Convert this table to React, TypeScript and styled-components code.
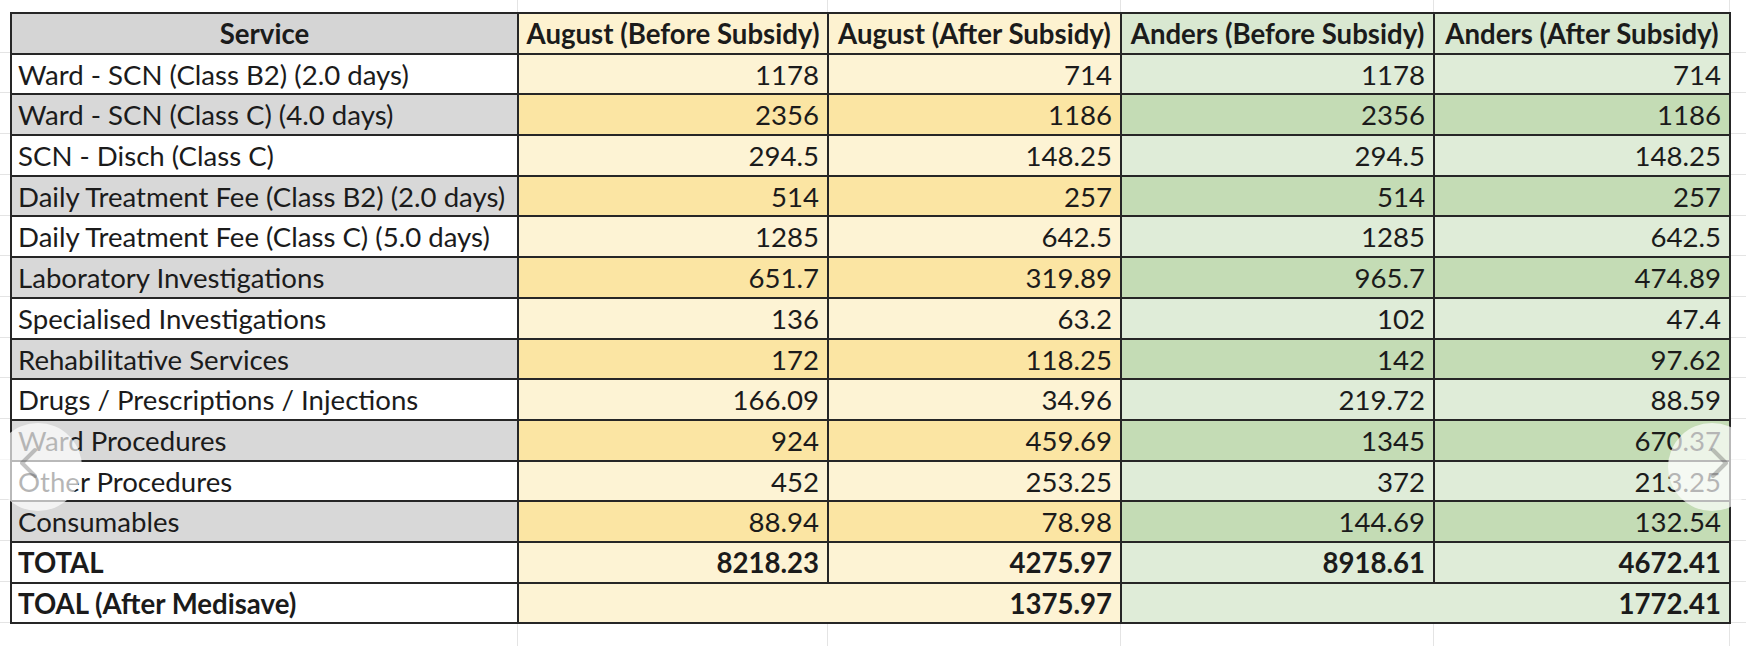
import React from "react";
import styled, { createGlobalStyle, css } from "styled-components";

const GlobalStyle = createGlobalStyle`
  html, body {
    margin: 0;
    padding: 0;
    background: #ffffff;
  }
  body {
    width: 1746px;
    height: 646px;
    overflow: hidden;
    font-family: Lato, "Open Sans", sans-serif;
    color: #1b1b1b;
  }
`;

type Tone = "service" | "aug" | "anders";
type Shade = "light" | "dark";

const palette: Record<Tone, Record<Shade | "head", string>> = {
  service: { head: "#d5d5d5", light: "#ffffff", dark: "#d8d8d8" },
  aug: { head: "#fdf2d0", light: "#fdf3d4", dark: "#fbe5a3" },
  anders: { head: "#d9e8d1", light: "#dfecd8", dark: "#c4dcb5" },
};

const Page = styled.div`
  position: relative;
  width: 1746px;
  height: 646px;
  box-sizing: border-box;
  padding: 12px 0 0 10px;
  background-color: #ffffff;
  background-image:
    linear-gradient(#e4e4e4, #e4e4e4),
    linear-gradient(#e4e4e4, #e4e4e4),
    linear-gradient(#e4e4e4, #e4e4e4),
    linear-gradient(#e4e4e4, #e4e4e4),
    linear-gradient(#e4e4e4, #e4e4e4),
    repeating-linear-gradient(
      to bottom,
      transparent 0,
      transparent 39.7px,
      #e4e4e4 39.7px,
      #e4e4e4 40.7px
    );
  background-size: 1px 100%, 1px 100%, 1px 100%, 1px 100%, 1px 100%, 100% 100%;
  background-position: 517px 0, 827px 0, 1120px 0, 1433px 0, 1729px 0, 0 12px;
  background-repeat: no-repeat;
`;

const Table = styled.table`
  border-collapse: collapse;
  table-layout: fixed;
  width: 1719px;
  font-size: 27.6px;
  line-height: 1;
`;

const Col = styled.col<{ $w: number }>`
  width: ${(p) => p.$w}px;
`;

const Row = styled.tr`
  height: 40.7px;
`;

const cellBase = css`
  border: 2px solid #262626;
  padding: 1px 8px 0 6px;
  white-space: nowrap;
  overflow: hidden;
  vertical-align: middle;
`;

const HeadCell = styled.th<{ $tone: Tone }>`
  ${cellBase};
  padding: 1px 2px 0 2px;
  text-align: center;
  font-weight: 700;
  background: ${(p) => palette[p.$tone].head};
`;

const Cell = styled.td<{
  $tone: Tone;
  $shade: Shade;
  $num?: boolean;
  $bold?: boolean;
}>`
  ${cellBase};
  text-align: ${(p) => (p.$num ? "right" : "left")};
  font-weight: ${(p) => (p.$bold ? 700 : 400)};
  background: ${(p) => palette[p.$tone][p.$shade]};
`;

const NavButton = styled.div<{ $side: "left" | "right" }>`
  position: absolute;
  top: 423px;
  ${(p) => (p.$side === "left" ? "left: -6px;" : "right: -10px;")}
  width: 88px;
  height: 88px;
  border-radius: 50%;
  background: rgba(255, 255, 255, 0.68);
  display: flex;
  align-items: center;
  justify-content: ${(p) => (p.$side === "left" ? "flex-start" : "flex-end")};
  padding: 0 ${(p) => (p.$side === "left" ? "26px" : "28px")};
  box-sizing: border-box;
  pointer-events: none;
`;

const Chevron = ({ dir }: { dir: "left" | "right" }) => (
  <svg width="18" height="32" viewBox="0 0 18 32" style={{ marginTop: -8 }}>
    <path
      d={dir === "left" ? "M15 3 L2 16 L15 29" : "M3 3 L16 16 L3 29"}
      fill="none"
      stroke="rgba(60,60,60,0.3)"
      strokeWidth="4"
      strokeLinecap="round"
      strokeLinejoin="round"
    />
  </svg>
);

const rows: [string, string, string, string, string][] = [
  ["Ward - SCN (Class B2) (2.0 days)", "1178", "714", "1178", "714"],
  ["Ward - SCN (Class C) (4.0 days)", "2356", "1186", "2356", "1186"],
  ["SCN - Disch (Class C)", "294.5", "148.25", "294.5", "148.25"],
  ["Daily Treatment Fee (Class B2) (2.0 days)", "514", "257", "514", "257"],
  ["Daily Treatment Fee (Class C) (5.0 days)", "1285", "642.5", "1285", "642.5"],
  ["Laboratory Investigations", "651.7", "319.89", "965.7", "474.89"],
  ["Specialised Investigations", "136", "63.2", "102", "47.4"],
  ["Rehabilitative Services", "172", "118.25", "142", "97.62"],
  ["Drugs / Prescriptions / Injections", "166.09", "34.96", "219.72", "88.59"],
  ["Ward Procedures", "924", "459.69", "1345", "670.37"],
  ["Other Procedures", "452", "253.25", "372", "213.25"],
  ["Consumables", "88.94", "78.98", "144.69", "132.54"],
];

export default function App() {
  return (
    <>
      <GlobalStyle />
      <Page>
        <Table>
          <colgroup>
            <Col $w={507} />
            <Col $w={310} />
            <Col $w={293} />
            <Col $w={313} />
            <Col $w={296} />
          </colgroup>
          <thead>
            <Row>
              <HeadCell $tone="service">Service</HeadCell>
              <HeadCell $tone="aug">August (Before Subsidy)</HeadCell>
              <HeadCell $tone="aug">August (After Subsidy)</HeadCell>
              <HeadCell $tone="anders">Anders (Before Subsidy)</HeadCell>
              <HeadCell $tone="anders">Anders (After Subsidy)</HeadCell>
            </Row>
          </thead>
          <tbody>
            {rows.map((r, i) => {
              const shade: Shade = i % 2 === 0 ? "light" : "dark";
              return (
                <Row key={r[0]}>
                  <Cell $tone="service" $shade={shade}>
                    {r[0]}
                  </Cell>
                  <Cell $tone="aug" $shade={shade} $num>
                    {r[1]}
                  </Cell>
                  <Cell $tone="aug" $shade={shade} $num>
                    {r[2]}
                  </Cell>
                  <Cell $tone="anders" $shade={shade} $num>
                    {r[3]}
                  </Cell>
                  <Cell $tone="anders" $shade={shade} $num>
                    {r[4]}
                  </Cell>
                </Row>
              );
            })}
            <Row>
              <Cell $tone="service" $shade="light" $bold>
                TOTAL
              </Cell>
              <Cell $tone="aug" $shade="light" $num $bold>
                8218.23
              </Cell>
              <Cell $tone="aug" $shade="light" $num $bold>
                4275.97
              </Cell>
              <Cell $tone="anders" $shade="light" $num $bold>
                8918.61
              </Cell>
              <Cell $tone="anders" $shade="light" $num $bold>
                4672.41
              </Cell>
            </Row>
            <Row>
              <Cell $tone="service" $shade="light" $bold>
                TOAL (After Medisave)
              </Cell>
              <Cell $tone="aug" $shade="light" $num $bold colSpan={2}>
                1375.97
              </Cell>
              <Cell $tone="anders" $shade="light" $num $bold colSpan={2}>
                1772.41
              </Cell>
            </Row>
          </tbody>
        </Table>
        <NavButton $side="left">
          <Chevron dir="left" />
        </NavButton>
        <NavButton $side="right">
          <Chevron dir="right" />
        </NavButton>
      </Page>
    </>
  );
}
